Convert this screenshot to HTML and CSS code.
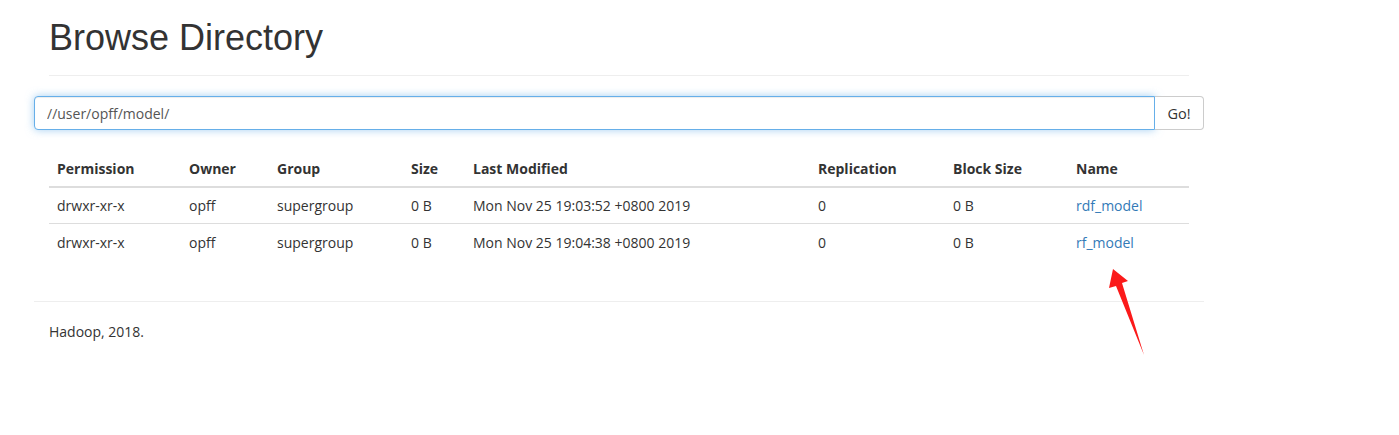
FILE: index.html
```html
<!DOCTYPE html>
<html>
<head>
<meta charset="utf-8">
<link rel="stylesheet" href="styles.css">
</head>
<body>
<div class="container">
  <div class="page-header">
    <h1>Browse Directory</h1>
  </div>
  <div class="input-group">
    <input class="form-control" type="text" value="//user/opff/model/">
    <button class="btn">Go!</button>
  </div>
  <div class="table-wrap">
    <table class="table">
      <thead>
        <tr>
          <th class="c-perm">Permission</th>
          <th class="c-owner">Owner</th>
          <th class="c-group">Group</th>
          <th class="c-size">Size</th>
          <th class="c-mod">Last Modified</th>
          <th class="c-rep">Replication</th>
          <th class="c-block">Block Size</th>
          <th>Name</th>
        </tr>
      </thead>
      <tbody>
        <tr>
          <td>drwxr-xr-x</td>
          <td>opff</td>
          <td>supergroup</td>
          <td>0 B</td>
          <td>Mon Nov 25 19:03:52 +0800 2019</td>
          <td>0</td>
          <td>0 B</td>
          <td><a href="#">rdf_model</a></td>
        </tr>
        <tr>
          <td>drwxr-xr-x</td>
          <td>opff</td>
          <td>supergroup</td>
          <td>0 B</td>
          <td>Mon Nov 25 19:04:38 +0800 2019</td>
          <td>0</td>
          <td>0 B</td>
          <td><a href="#">rf_model</a></td>
        </tr>
      </tbody>
    </table>
  </div>
  <hr class="footer-rule">
  <div class="footer">Hadoop, 2018.</div>
</div>
<svg class="arrow" width="1399" height="435" viewBox="0 0 1399 435">
  <polygon points="1113,269 1128,281 1122,283 1144,355 1116,286 1109,288" fill="#fb1a1a"/>
</svg>
</body>
</html>
```
FILE: styles.css
```css
html, body {
  margin: 0;
  padding: 0;
  background: #fff;
}
body {
  font-family: "Open Sans", "Noto Sans", sans-serif;
  font-size: 14px;
  color: #333;
  position: relative;
  width: 1399px;
  height: 435px;
  overflow: hidden;
}
.container {
  margin-left: 34px;
  width: 1170px;
}
.page-header {
  margin: 0 15px;
  border-bottom: 1px solid #eee;
  height: 76px;
  box-sizing: border-box;
}
.page-header h1 {
  margin: 0;
  padding-top: 16px;
  font-family: "Liberation Sans", Arial, sans-serif;
  font-weight: 400;
  font-size: 36px;
  line-height: 44px;
  color: #333;
}
.input-group {
  display: flex;
  margin-top: 20px;
  height: 34px;
}
.form-control {
  flex: 1;
  height: 34px;
  box-sizing: border-box;
  border: 1px solid #66afe9;
  border-radius: 4px 0 0 4px;
  padding: 6px 12px;
  font-family: "Open Sans", "Noto Sans", sans-serif;
  font-size: 14px;
  color: #555;
  outline: none;
  box-shadow: inset 0 1px 1px rgba(0,0,0,.075), 0 0 8px rgba(102,175,233,.6);
}
.btn {
  width: 49px;
  height: 34px;
  box-sizing: border-box;
  border: 1px solid #ccc;
  border-left: none;
  border-radius: 0 4px 4px 0;
  background: #fff;
  font-family: "Open Sans", "Noto Sans", sans-serif;
  font-size: 14.5px;
  color: #333;
  padding: 0;
}
.table-wrap {
  margin: 20px 15px 0;
}
.table {
  width: 100%;
  border-collapse: collapse;
}
.table th, .table td {
  text-align: left;
  padding: 0 8px;
  white-space: nowrap;
}
.table td {
  height: 37px;
  box-sizing: border-box;
  border-top: 1px solid #ddd;
  padding-top: 1px;
}
.table th {
  font-weight: 700;
  height: 36px;
  border-bottom: 2px solid #ddd;
}
.table tbody tr:first-child td {
  border-top: none;
  height: 36px;
  padding-top: 0;
}
.c-perm { width: 116px; }
.c-owner { width: 72px; }
.c-group { width: 118px; }
.c-size { width: 46px; }
.c-mod { width: 329px; }
.c-rep { width: 119px; }
.c-block { width: 107px; }
.table a {
  color: #337ab7;
  text-decoration: none;
}
.footer-rule {
  margin: 41px 0 0;
  border: 0;
  border-top: 1px solid #eee;
}
.footer {
  padding: 20px 15px;
  line-height: 20px;
}
.arrow {
  position: absolute;
  left: 0;
  top: 0;
  pointer-events: none;
}
```
